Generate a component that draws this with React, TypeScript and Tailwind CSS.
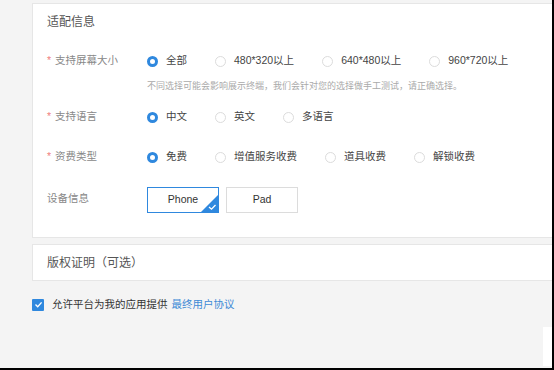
import { ReactNode } from 'react'

const font = { fontFamily: '"Liberation Sans", "Noto Sans CJK SC", sans-serif' }

function Radio({ label, checked }: { label: string; checked?: boolean }) {
  return (
    <div className="flex items-center">
      <span
        className={
          checked
            ? 'h-[11px] w-[11px] rounded-full border-[3px] border-[#2f88de] bg-white'
            : 'h-[11px] w-[11px] rounded-full border border-[#dcdcdc] bg-white'
        }
      />
      <span className="ml-[8px] text-[10.5px] text-[#444]">{label}</span>
    </div>
  )
}

function Row({ label, required, children }: { label: string; required?: boolean; children: ReactNode }) {
  return (
    <div className="flex h-[22px] items-center">
      <div className="flex w-[100px] items-center text-[10.5px] text-[#888]">
        {required && <span className="w-[8px] text-[#f08080]">*</span>}
        {!required && <span className="w-[0px]" />}
        <span>{label}</span>
      </div>
      <div className="flex items-center gap-[28px]">{children}</div>
    </div>
  )
}

export default function App() {
  return (
    <div
      className="relative h-[370px] w-[554px] overflow-hidden border-b-2 border-r-2 border-black bg-[#f4f4f4] pt-[3px]"
      style={font}
    >
      <div className="ml-[32px] mr-[-4px] border border-[#e6e6e6] bg-white pb-[24px]">
        <div className="flex h-[36px] items-center pl-[14px] text-[12px] text-[#555]">适配信息</div>
        <div className="pl-[14px]">
          <div className="mt-[10px]">
            <Row label="支持屏幕大小" required>
              <Radio label="全部" checked />
              <Radio label="480*320以上" />
              <Radio label="640*480以上" />
              <Radio label="960*720以上" />
            </Row>
          </div>
          <div className="ml-[100px] mt-[7px] h-[14px] text-[9px] leading-[14px] text-[#aaa]">
            不同选择可能会影响展示终端，我们会针对您的选择做手工测试，请正确选择。
          </div>
          <div className="mt-[13px]">
            <Row label="支持语言" required>
              <Radio label="中文" checked />
              <Radio label="英文" />
              <Radio label="多语言" />
            </Row>
          </div>
          <div className="mt-[18px]">
            <Row label="资费类型" required>
              <Radio label="免费" checked />
              <Radio label="增值服务收费" />
              <Radio label="道具收费" />
              <Radio label="解锁收费" />
            </Row>
          </div>
          <div className="mt-[19px] flex items-start">
            <div className="h-[22px] w-[100px] text-[10.5px] leading-[22px] text-[#888]">设备信息</div>
            <div className="flex gap-[7px]">
              <div className="relative flex h-[26px] w-[72px] items-center justify-center border border-[#2f88de] text-[10.5px] text-[#333]">
                Phone
                <svg className="absolute bottom-0 right-0" width="17" height="17" viewBox="0 0 17 17">
                  <path d="M17 0 L17 17 L0 17 Z" fill="#2f88de" />
                  <path d="M8 12 L10.5 14.2 L14.5 10" fill="none" stroke="#fff" strokeWidth="1.3" />
                </svg>
              </div>
              <div className="flex h-[26px] w-[72px] items-center justify-center border border-[#dcdcdc] text-[10.5px] text-[#333]">
                Pad
              </div>
            </div>
          </div>
        </div>
      </div>
      <div className="ml-[32px] mr-[-4px] mt-[6px] flex h-[37px] items-center border border-[#e6e6e6] bg-white pl-[14px] text-[12px] text-[#555]">
        版权证明（可选）
      </div>
      <div className="ml-[32px] mt-[16px] flex items-center">
        <span className="flex h-[12px] w-[12px] items-center justify-center rounded-[1px] bg-[#2f88de]">
          <svg width="9" height="9" viewBox="0 0 9 9">
            <path d="M1.5 4.6 L3.7 6.7 L7.6 2.4" fill="none" stroke="#fff" strokeWidth="1.4" />
          </svg>
        </span>
        <span className="ml-[8px] text-[10.5px] text-[#333]">允许平台为我的应用提供</span>
        <span className="ml-[4px] text-[10.5px] text-[#3d8ad6]">最终用户协议</span>
      </div>
      <div className="absolute bottom-[2px] right-0 h-[39px] w-[9px] bg-white" />
    </div>
  )
}
